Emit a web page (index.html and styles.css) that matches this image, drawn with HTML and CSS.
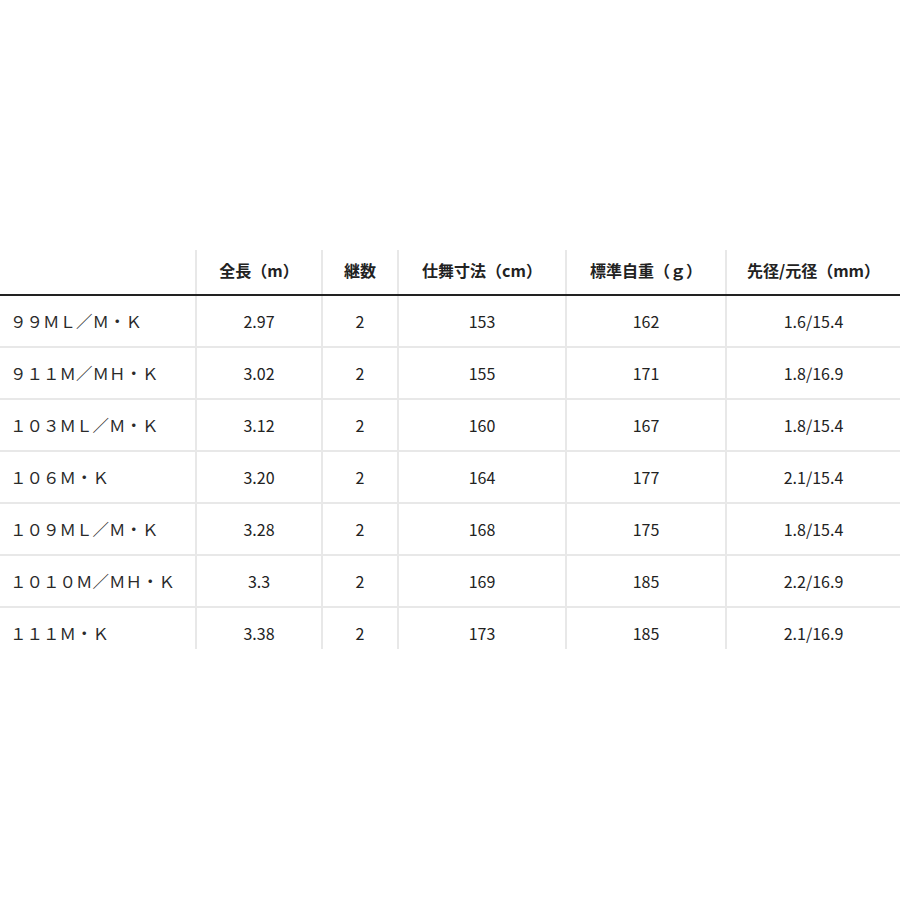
FILE: index.html
```html
<!DOCTYPE html>
<html lang="ja">
<head>
<meta charset="utf-8">
<link rel="stylesheet" href="styles.css">
</head>
<body>
<table class="spec">
  <colgroup>
    <col class="c1"><col class="c2"><col class="c3"><col class="c4"><col class="c5"><col class="c6">
  </colgroup>
  <thead>
    <tr>
      <th></th>
      <th>全長（m）</th>
      <th>継数</th>
      <th>仕舞寸法（cm）</th>
      <th>標準自重（ｇ）</th>
      <th>先径/元径（mm）</th>
    </tr>
  </thead>
  <tbody>
    <tr><td class="name">９９ＭＬ／Ｍ・Ｋ</td><td>2.97</td><td>2</td><td>153</td><td>162</td><td>1.6/15.4</td></tr>
    <tr><td class="name">９１１Ｍ／ＭＨ・Ｋ</td><td>3.02</td><td>2</td><td>155</td><td>171</td><td>1.8/16.9</td></tr>
    <tr><td class="name">１０３ＭＬ／Ｍ・Ｋ</td><td>3.12</td><td>2</td><td>160</td><td>167</td><td>1.8/15.4</td></tr>
    <tr><td class="name">１０６Ｍ・Ｋ</td><td>3.20</td><td>2</td><td>164</td><td>177</td><td>2.1/15.4</td></tr>
    <tr><td class="name">１０９ＭＬ／Ｍ・Ｋ</td><td>3.28</td><td>2</td><td>168</td><td>175</td><td>1.8/15.4</td></tr>
    <tr><td class="name">１０１０Ｍ／ＭＨ・Ｋ</td><td>3.3</td><td>2</td><td>169</td><td>185</td><td>2.2/16.9</td></tr>
    <tr><td class="name">１１１Ｍ・Ｋ</td><td>3.38</td><td>2</td><td>173</td><td>185</td><td>2.1/16.9</td></tr>
  </tbody>
</table>
</body>
</html>
```

FILE: styles.css
```css
html, body {
  margin: 0;
  padding: 0;
  background: #fff;
}
body {
  font-family: "Noto Sans CJK JP", "Noto Sans", sans-serif;
  color: #222;
  font-size: 16px;
}
.spec {
  margin-top: 250px;
  width: 900px;
  border-collapse: collapse;
  table-layout: fixed;
}
.c1 { width: 196px; }
.c2 { width: 126px; }
.c3 { width: 76px; }
.c4 { width: 168px; }
.c5 { width: 160px; }
.c6 { width: 174px; }
.spec th {
  font-weight: 700;
  line-height: 24px;
  padding: 8px 0 12px;
  text-align: center;
  border-bottom: 2px solid #222;
  border-left: 2px solid #e8e8e8;
  color: #222;
}
.spec td {
  line-height: 24px;
  padding: 13px 0 13px;
  text-align: center;
  border-left: 2px solid #e8e8e8;
  border-bottom: 2px solid #e8e8e8;
  color: #222;
}
.spec th:first-child,
.spec td:first-child {
  border-left: none;
}
.spec td.name {
  text-align: left;
  padding-left: 10px;
  font-size: 16.5px;
  color: #2a2a2a;
}
.spec tbody tr:last-child td {
  border-bottom: none;
  padding-bottom: 4px;
}
```
